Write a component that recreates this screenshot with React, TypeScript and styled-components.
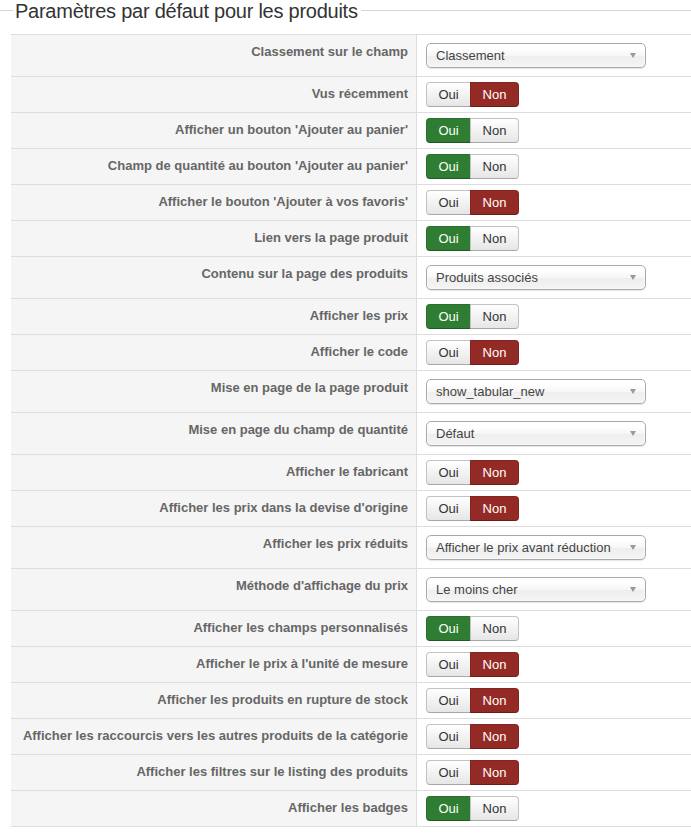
import React from "react";
import styled, { createGlobalStyle } from "styled-components";

const Global = createGlobalStyle`
  html, body { margin: 0; padding: 0; background: #fff; }
  body { font-family: "Liberation Sans", Arial, sans-serif; font-size: 13px; color: #333; }
`;

const Fieldset = styled.section`
  width: 691px;
  overflow: hidden;
`;

const LegendRow = styled.div`
  display: flex;
  align-items: flex-start;
  height: 22px;
`;

const LegendLine = styled.div<{ $grow?: boolean }>`
  height: 1px;
  background: #d5d5d5;
  width: 13px;
  flex: ${(p) => (p.$grow ? "1" : "none")};
  margin-top: 10px;
`;

const LegendText = styled.h2`
  margin: 0;
  padding: 0 3px 0 2px;
  font-weight: normal;
  font-size: 20px;
  line-height: 22px;
  letter-spacing: -0.25px;
  color: #333;
  white-space: nowrap;
`;

const Table = styled.div`
  margin: 12px 0 0 11px;
  border-bottom: 1px solid #ddd;
`;

const Row = styled.div`
  display: grid;
  grid-template-columns: 406px 1fr;
  border-top: 1px solid #ddd;
`;

const Label = styled.div`
  background: #f5f5f5;
  border-right: 1px solid #ddd;
  text-align: right;
  padding: 10px 8px 0 0;
  font-weight: bold;
  font-size: 13px;
  line-height: 14px;
  color: #666;
  white-space: nowrap;
`;

const Control = styled.div<{ $select?: boolean }>`
  padding: ${(p) => (p.$select ? "8px 0 8px 9px" : "5px 0 5px 9px")};
  display: flex;
  align-items: center;
`;

const Select = styled.div`
  box-sizing: border-box;
  width: 220px;
  height: 25px;
  border: 1px solid #aaa;
  border-radius: 5px;
  background: linear-gradient(#fff 20%, #f6f6f6 50%, #eee 52%, #f4f4f4 100%);
  box-shadow: 0 0 3px #fff inset, 0 1px 1px rgba(0, 0, 0, 0.1);
  display: flex;
  align-items: center;
  justify-content: space-between;
  padding: 0 9px 0 9px;
  font-size: 13px;
  color: #444;
`;

const Caret = styled.span`
  width: 0;
  height: 0;
  border-left: 3.5px solid transparent;
  border-right: 3.5px solid transparent;
  border-top: 5px solid #999;
`;

const Toggle = styled.div`
  display: flex;
  height: 25px;
`;

const ToggleBtn = styled.div<{ $state: "off" | "yes" | "no"; $first?: boolean }>`
  box-sizing: border-box;
  height: 25px;
  display: flex;
  align-items: center;
  justify-content: center;
  width: ${(p) => (p.$first ? "45px" : "49px")};
  font-size: 13px;
  border-radius: ${(p) => (p.$first ? "4px 0 0 4px" : "0 4px 4px 0")};
  color: ${(p) => (p.$state === "off" ? "#333" : "#fff")};
  background: ${(p) =>
    p.$state === "yes"
      ? "#2f7d32"
      : p.$state === "no"
      ? "#942a25"
      : "linear-gradient(#ffffff, #e6e6e6)"};
  border: 1px solid
    ${(p) =>
      p.$state === "yes" ? "#2a6f2d" : p.$state === "no" ? "#852520" : "#c2c2c2"};
  border-bottom-color: ${(p) => (p.$state === "off" ? "#a8a8a8" : "rgba(0,0,0,0.3)")};
  ${(p) => (p.$first ? "" : "margin-left: -1px;")}
`;

type Item =
  | { label: string; select: string }
  | { label: string; yes: boolean };

const items: Item[] = [
  { label: "Classement sur le champ", select: "Classement" },
  { label: "Vus récemment", yes: false },
  { label: "Afficher un bouton 'Ajouter au panier'", yes: true },
  { label: "Champ de quantité au bouton 'Ajouter au panier'", yes: true },
  { label: "Afficher le bouton 'Ajouter à vos favoris'", yes: false },
  { label: "Lien vers la page produit", yes: true },
  { label: "Contenu sur la page des produits", select: "Produits associés" },
  { label: "Afficher les prix", yes: true },
  { label: "Afficher le code", yes: false },
  { label: "Mise en page de la page produit", select: "show_tabular_new" },
  { label: "Mise en page du champ de quantité", select: "Défaut" },
  { label: "Afficher le fabricant", yes: false },
  { label: "Afficher les prix dans la devise d'origine", yes: false },
  { label: "Afficher les prix réduits", select: "Afficher le prix avant réduction" },
  { label: "Méthode d'affichage du prix", select: "Le moins cher" },
  { label: "Afficher les champs personnalisés", yes: true },
  { label: "Afficher le prix à l'unité de mesure", yes: false },
  { label: "Afficher les produits en rupture de stock", yes: false },
  { label: "Afficher les raccourcis vers les autres produits de la catégorie", yes: false },
  { label: "Afficher les filtres sur le listing des produits", yes: false },
  { label: "Afficher les badges", yes: true },
];

export default function App() {
  return (
    <>
      <Global />
      <Fieldset>
        <LegendRow>
          <LegendLine />
          <LegendText>Paramètres par défaut pour les produits</LegendText>
          <LegendLine $grow />
        </LegendRow>
        <Table>
          {items.map((it) => (
            <Row key={it.label}>
              <Label>{it.label}</Label>
              {"select" in it ? (
                <Control $select>
                  <Select>
                    <span>{it.select}</span>
                    <Caret />
                  </Select>
                </Control>
              ) : (
                <Control>
                  <Toggle>
                    <ToggleBtn $first $state={it.yes ? "yes" : "off"}>Oui</ToggleBtn>
                    <ToggleBtn $state={it.yes ? "off" : "no"}>Non</ToggleBtn>
                  </Toggle>
                </Control>
              )}
            </Row>
          ))}
        </Table>
      </Fieldset>
    </>
  );
}
